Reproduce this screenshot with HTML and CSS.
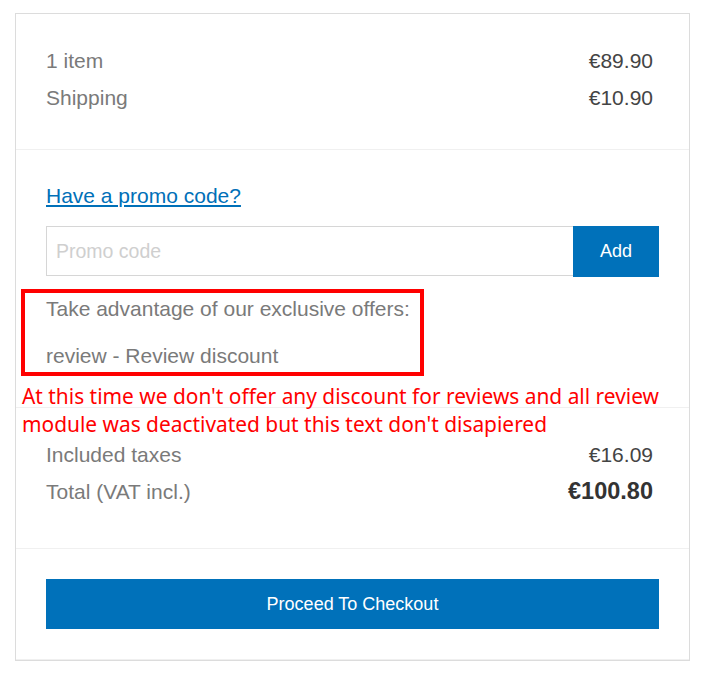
FILE: index.html
```html
<!DOCTYPE html>
<html>
    <head>
        <link rel="stylesheet" href="styles.css">
    </head>
    <body>
        <div class="cart">
            <div class="block sums">
                <div class="row"><span class="label">1 item</span><span class="value">€89.90</span></div>
                <div class="row"><span class="label">Shipping</span><span class="value">€10.90</span></div>
            </div>
            <div class="block promo">
                <a href="javascript:;" class="promoLink">Have a promo code?</a>
                <form class="promoForm">
                    <input type="text" class="promoInput" placeholder="Promo code">
                    <button type="button" class="btn addBtn">Add</button>
                </form>
                <p class="offers">Take advantage of our exclusive offers:</p>
                <p class="offers">review - Review discount</p>
            </div>
            <div class="block totals">
                <div class="row"><span class="label">Included taxes</span><span class="value">€16.09</span></div>
                <div class="row"><span class="label">Total (VAT incl.)</span><span class="value total">€100.80</span></div>
            </div>
            <div class="block checkout">
                <button type="button" class="btn checkoutBtn">Proceed To Checkout</button>
            </div>

            <!-- annotation over the screenshot -->
            <div class="markBox"></div>
            <div class="note">At this time we don't offer any discount for reviews and all review module was deactivated but this text don't disapiered</div>
        </div>
    </body>
</html>
```

FILE: styles.css
```css
*{
    padding: 0;
    margin: 0;
    box-sizing: border-box;
}
body{
    font-family: "Liberation Sans", Arial, sans-serif;
    background: #fff;
}
.cart{
    position: relative;
    width: 675px;
    margin: 13px 0 0 15px;
    border: 1px solid #dcdcdc;
    background: #fff;
}
.block{
    padding: 0 30px;
    border-bottom: 1px solid #f0f0f0;
}
.block:last-of-type{
    border-bottom: none;
}
.row{
    display: flex;
    justify-content: space-between;
    align-items: center;
    height: 37px;
    font-size: 21px;
    padding-right: 6px;
}
.label{
    color: #7a7a7a;
}
.value{
    color: #444;
}
.total{
    font-size: 23.5px;
    font-weight: bold;
    color: #333;
}
.sums{
    padding-top: 28px;
    padding-bottom: 33px;
}
.promo{
    padding-top: 34px;
    padding-bottom: 39px;
}
.promoLink{
    display: inline-block;
    line-height: 24px;
    font-size: 21px;
    color: #0070b8;
    text-decoration: underline;
}
.promoForm{
    display: flex;
    margin-top: 18px;
    height: 50px;
}
.promoInput{
    flex: 1;
    height: 50px;
    border: 1px solid #d6d6d6;
    border-right: none;
    padding: 0 9px;
    font-family: inherit;
    font-size: 19.5px;
    color: #555;
    outline: none;
}
.promoInput::placeholder{
    color: #cfcfcf;
}
.btn{
    border: none;
    background-color: #0071ba;
    color: #fff;
    font-family: inherit;
    font-size: 18px;
    cursor: pointer;
}
.addBtn{
    width: 86px;
    height: 51px;
}
.offers{
    font-size: 21px;
    line-height: 24px;
    color: #7a7a7a;
    margin-top: 21px;
}
.offers + .offers{
    margin-top: 23px;
}
.totals{
    padding-top: 28px;
    padding-bottom: 38px;
}
.checkout{
    padding-top: 30px;
    padding-bottom: 30px;
}
.checkoutBtn{
    display: block;
    width: 100%;
    height: 50px;
}
.markBox{
    position: absolute;
    left: 5px;
    top: 275px;
    width: 403px;
    height: 87px;
    border: 4px solid #ff0000;
}
.note{
    position: absolute;
    left: 6px;
    top: 368px;
    width: 660px;
    font-family: "Noto Sans", sans-serif;
    font-size: 20.9px;
    line-height: 28px;
    color: #ff0000;
}
```
